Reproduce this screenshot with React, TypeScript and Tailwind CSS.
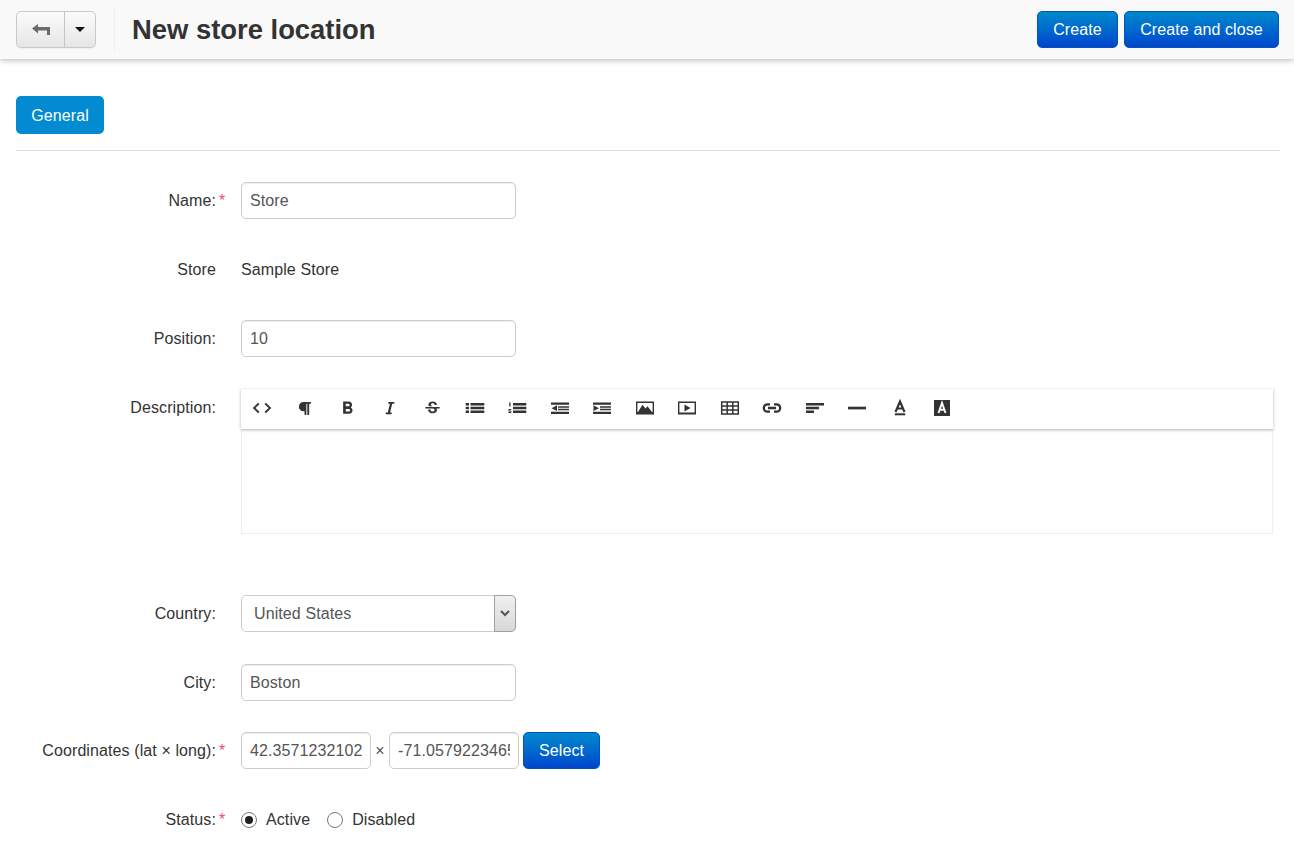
import type { ReactNode } from "react";
import { MdFormatBold, MdStrikethroughS } from "react-icons/md";
import { FaItalic, FaParagraph } from "react-icons/fa";

function Svg({ children }: { children: ReactNode }) {
  return (
    <svg width="20" height="20" viewBox="0 0 20 20" fill="#333">
      {children}
    </svg>
  );
}

const toolbarIcons: ReactNode[] = [
  <Svg>
    <path d="M6.800 5.500 2 10l4.800 4.500M13.200 5.500 18 10l-4.800 4.500" fill="none" stroke="#333" strokeWidth="1.800" />
  </Svg>,
  <FaParagraph size={15} color="#333" />,
  <MdFormatBold size={21} color="#333" />,
  <FaItalic size={14} color="#333" />,
  <MdStrikethroughS size={19} color="#333" />,
  <Svg>
    <path d="M.7 5h3.300v2.600H.7zM.7 8.700h3.300v2.600H.7zM.7 12.400h3.300v2.600H.7zM5.500 5h13.800v2.600H5.500zM5.500 8.700h13.800v2.600H5.500zM5.500 12.400h13.800v2.600H5.500z" />
  </Svg>,
  <Svg>
    <path d="M6 5h13.300v2.600H6zM6 8.700h13.300v2.600H6zM6 12.400h13.300v2.600H6zM2.200 4.500h1.300v4H2.200zM1.500 11h2.800v.9H2.500v.9h1.800v2.200H1.500v-.9h1.800v-.5H1.500z" />
  </Svg>,
  <Svg>
    <path d="M1 4.500h18v2.300H1zM8 8.300h11v1.500H8zM8 10.800h11v1.500H8zM1 13.700h18v2.300H1zM7 7.300v5.700L1.500 10.200z" />
  </Svg>,
  <Svg>
    <path d="M1 4.500h18v2.300H1zM8 8.300h11v1.500H8zM8 10.800h11v1.500H8zM1 13.700h18v2.300H1zM1.500 7.300v5.700L7 10.200z" />
  </Svg>,
  <Svg>
    <path d="M1.700 4.200h16.600v11.600H1.700z" fill="none" stroke="#333" strokeWidth="1.400" />
    <path d="M3 14 7.500 6.800l3 3.700 2-2.300 4.500 5.800zM1.500 14h17v2h-17z" />
  </Svg>,
  <Svg>
    <path d="M1.700 4.200h16.600v11.600H1.700z" fill="none" stroke="#333" strokeWidth="1.400" />
    <path d="M7.500 6.500v7l6-3.500zM1.500 14.500h17v1.500h-17z" />
  </Svg>,
  <Svg>
    <path d="M1.700 4h16.600v12H1.700zM1.700 8h16.600M1.700 12h16.600M7.200 4v12M12.800 4v12" fill="none" stroke="#333" strokeWidth="1.500" />
  </Svg>,
  <Svg>
    <path d="M8 6.300H5.500a3.700 3.700 0 0 0 0 7.400H8M12 6.300h2.500a3.700 3.700 0 0 1 0 7.400H12M6 10h8" fill="none" stroke="#333" strokeWidth="2.300" />
  </Svg>,
  <Svg>
    <path d="M1 5h18v2.600H1zM1 8.700h13v2.600H1zM1 12.400h8v2.600H1z" />
  </Svg>,
  <Svg>
    <path d="M1 8.700h18v2.700H1z" />
  </Svg>,
  <Svg>
    <path d="M5.500 14 10 3.500 14.500 14M7.300 10.500h5.400" fill="none" stroke="#333" strokeWidth="2.200" />
    <path d="M4.800 15.300h10.400v2H4.800z" />
  </Svg>,
  <Svg>
    <path d="M2 2h16v16H2z" />
    <path d="M6.500 15 10 5l3.500 10M7.800 11.800h4.400" fill="none" stroke="#fff" strokeWidth="1.900" />
  </Svg>,
];

function Row({
  label,
  required,
  gap = "mb-8",
  children,
}: {
  label: string;
  required?: boolean;
  gap?: string;
  children: ReactNode;
}) {
  return (
    <div className={`flex ${gap}`}>
      <div className="w-[200px] h-[37px] flex items-center justify-end text-[#333]">{label}</div>
      <div className="w-[25px] h-[37px] pl-[3px] flex items-center text-[#f5486a]">{required ? "*" : ""}</div>
      {children}
    </div>
  );
}

function TextInput({ value, width = "w-[275px]" }: { value: string; width?: string }) {
  return (
    <input
      readOnly
      value={value}
      className={`${width} h-[37px] px-2 border border-[#ccc] rounded-[5px] bg-white text-[#555] shadow-[inset_0_1px_1px_rgba(0,0,0,0.075)] outline-none`}
    />
  );
}

function Radio({ label, checked }: { label: string; checked?: boolean }) {
  return (
    <label className="flex items-center gap-[9px] text-[#333]">
      <span className="w-4 h-4 rounded-full border border-[#767676] bg-white flex items-center justify-center">
        {checked && <span className="w-2 h-2 rounded-full bg-[#222]" />}
      </span>
      {label}
    </label>
  );
}

const primaryBtn =
  "h-[37px] pt-px rounded-[5px] border border-[#0055b8] bg-gradient-to-b from-[#0088cc] to-[#0044cc] text-white";

export default function App() {
  return (
    <div className="h-[866px] overflow-hidden bg-white text-[16px] tracking-[0.1px] font-['Liberation_Sans',Arial,sans-serif]">
      {/* Top bar */}
      <div className="h-[59px] bg-[#f9f9f9] shadow-[0_1px_6px_rgba(0,0,0,0.3)] flex items-center pl-4 pr-[15px]">
        <div className="flex h-[37px] mb-[1px] rounded-[5px] border border-[#c8c8c8] bg-gradient-to-b from-[#fbfbfb] to-[#e6e6e6] shadow-[0_1px_1px_rgba(0,0,0,0.05)]">
          <div className="w-[48px] flex items-center justify-center border-r border-[#c4c4c4]">
            <svg width="18" height="11" viewBox="0 0 18 11" fill="#6b6b6b">
              <path d="M0 4.500 6 0v3h12v8h-3V6.500H6V9.500z" />
            </svg>
          </div>
          <div className="w-[30px] flex items-center justify-center">
            <span className="w-0 h-0 border-x-[5px] border-x-transparent border-t-[5px] border-t-[#111]" />
          </div>
        </div>
        <div className="w-px h-[44px] bg-[#f0f0f0] ml-[18px] mr-[17px]" />
        <h1 className="text-[27.4px] tracking-normal mt-px font-bold text-[#333] flex-1">New store location</h1>
        <div className="flex gap-[6px] mb-[1px]">
          <button className={`${primaryBtn} w-[81px]`}>Create</button>
          <button className={`${primaryBtn} w-[155px]`}>Create and close</button>
        </div>
      </div>

      <div className="pl-4 pr-[14px] pt-[37px]">
        {/* Tabs */}
        <div className="h-[55px] border-b border-[#ddd]">
          <button className="w-[88px] h-[38px] pt-px rounded-[5px] bg-[#028bd0] text-white">General</button>
        </div>

        {/* Form */}
        <form className="pt-[31px]">
          <Row label="Name:" required>
            <TextInput value="Store" />
          </Row>
          <Row label="Store">
            <div className="h-[37px] flex items-center text-[#333]">Sample Store</div>
          </Row>
          <Row label="Position:">
            <TextInput value="10" />
          </Row>
          <div className="flex mb-[61px]">
            <div className="w-[200px] h-[37px] flex items-center justify-end text-[#333]">Description:</div>
            <div className="w-[25px]" />
            <div className="w-[1032px] h-[145px] border-b border-x border-[#eee]">
              <div className="h-[40px] -mx-px bg-white shadow-[0_1px_3px_rgba(0,0,0,0.3)] flex">
                {toolbarIcons.map((icon, i) => (
                  <div key={i} className="w-[42.5px] h-[38px] flex items-center justify-center">
                    {icon}
                  </div>
                ))}
              </div>
            </div>
          </div>
          <Row label="Country:">
            <div className="relative w-[275px] h-[37px]">
              <select className="w-full h-full pl-[12px] border border-[#ccc] rounded-[5px] bg-white text-[#555] appearance-none outline-none">
                <option>United States</option>
              </select>
              <div className="absolute right-0 top-0 w-[22px] h-[37px] border border-[#a0a0a0] rounded-r-[5px] bg-gradient-to-b from-[#f0f0f0] to-[#d8d8d8] flex items-center justify-center">
                <svg width="10" height="7" viewBox="0 0 10 7">
                  <path d="M1 1l4 4 4-4" fill="none" stroke="#555" strokeWidth="2" />
                </svg>
              </div>
            </div>
          </Row>
          <Row label="City:" gap="mb-[31px]">
            <TextInput value="Boston" />
          </Row>
          <Row label="Coordinates (lat × long):" required>
            <div className="flex items-center">
              <TextInput value="42.3571232102" width="w-[130px]" />
              <span className="w-[18px] text-center text-[#555]">×</span>
              <TextInput value="-71.05792234655" width="w-[130px]" />
              <button type="button" className={`${primaryBtn} w-[77px] ml-1`}>
                Select
              </button>
            </div>
          </Row>
          <Row label="Status:" required>
            <div className="flex items-center gap-[17px]">
              <Radio label="Active" checked />
              <Radio label="Disabled" />
            </div>
          </Row>
        </form>
      </div>
    </div>
  );
}
